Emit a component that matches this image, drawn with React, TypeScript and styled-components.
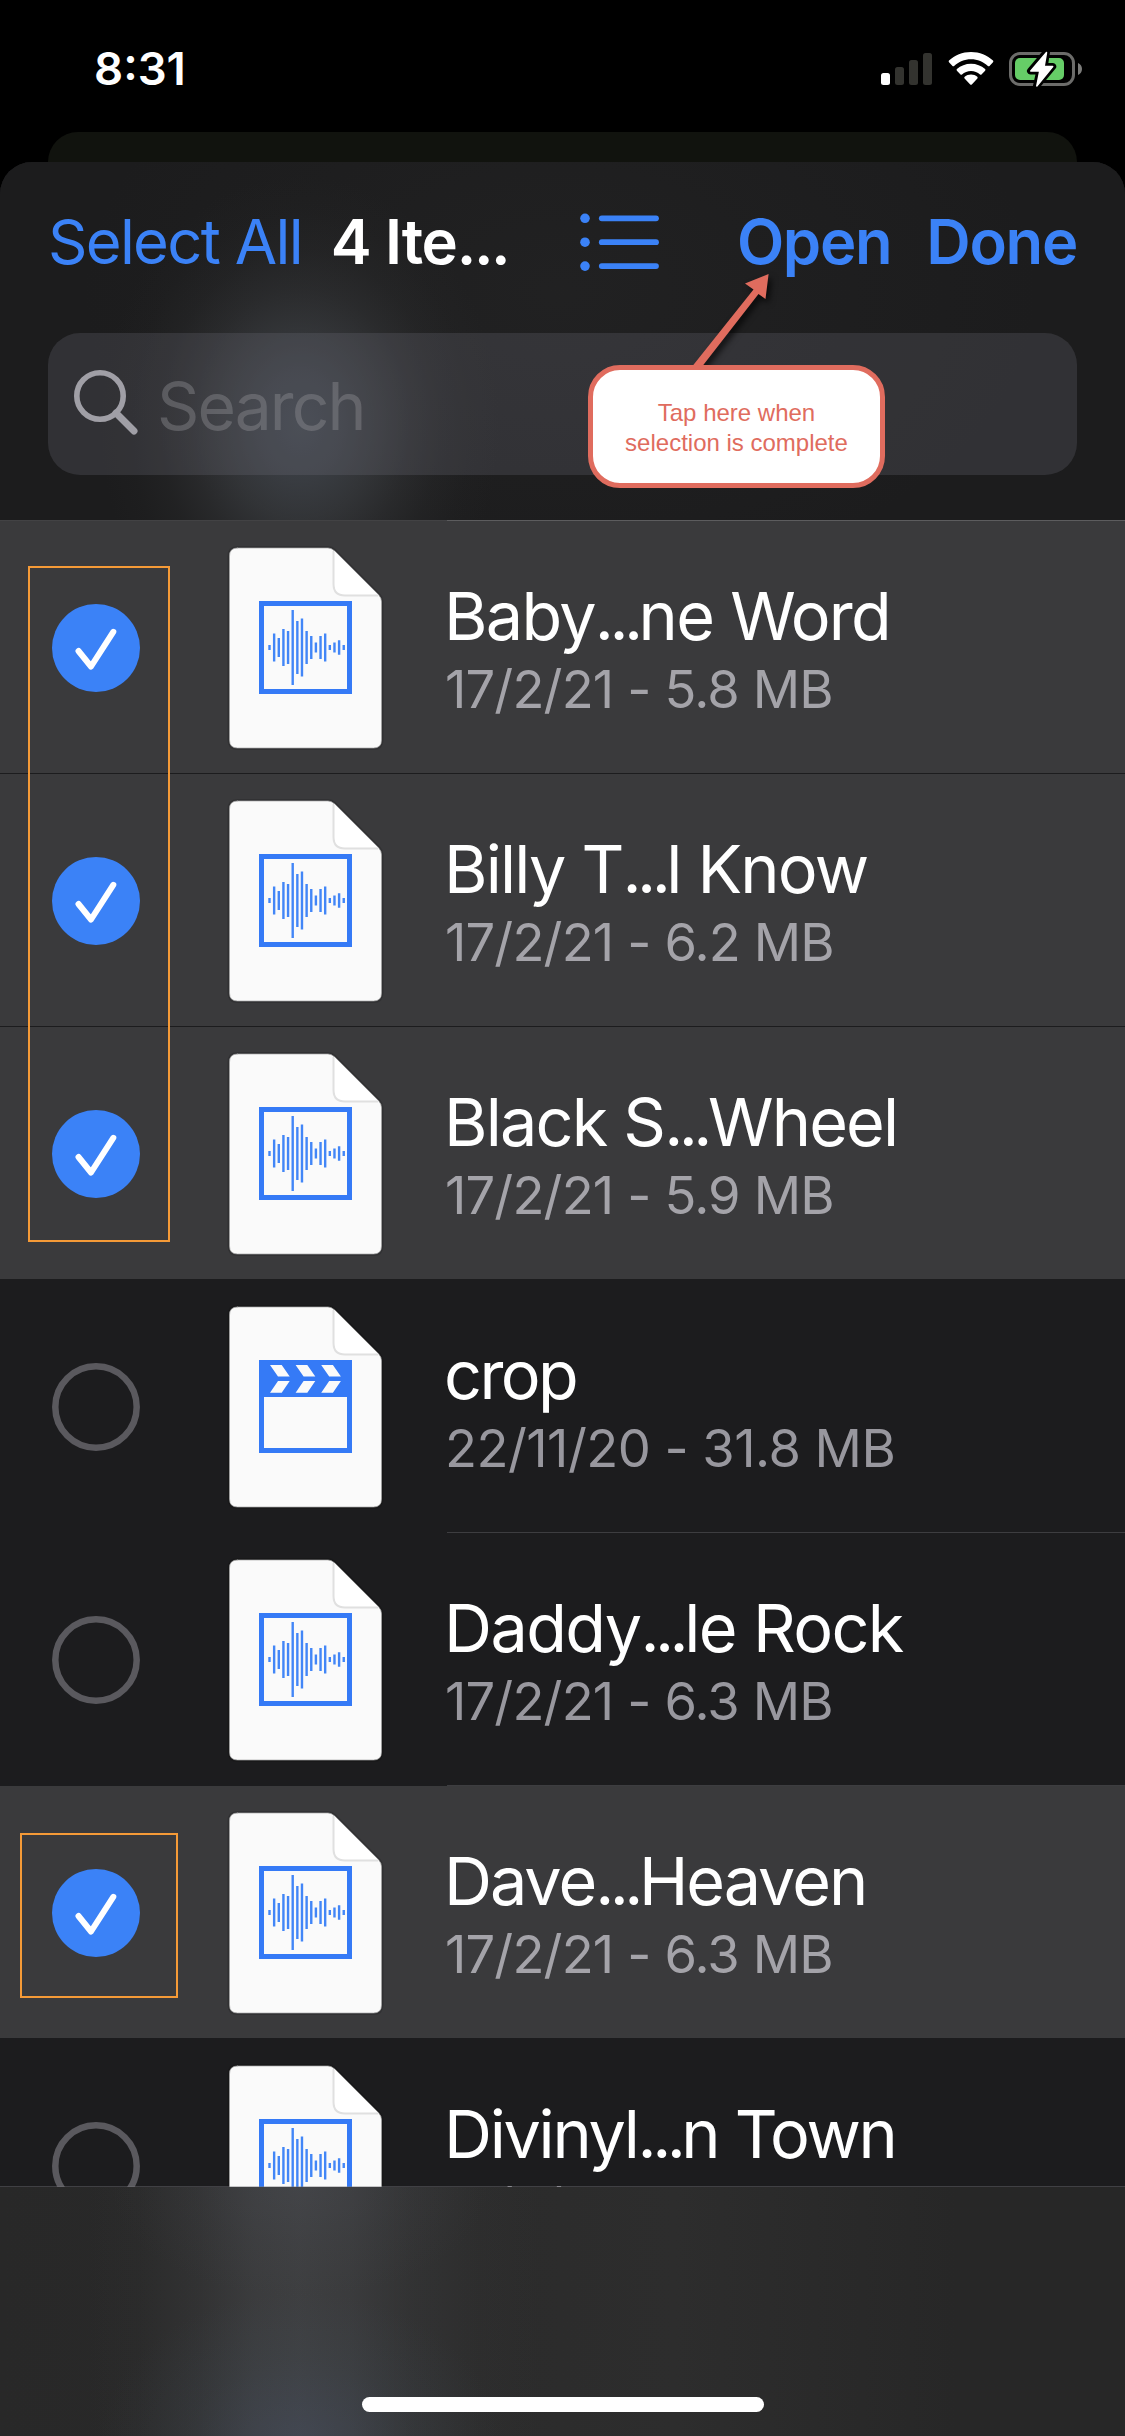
import React from "react";
import styled, { createGlobalStyle } from "styled-components";

const BLUE = "#3b82f7";
const DOC_BLUE = "#357af6";
const CORAL = "#e06c5e";
const ORANGE = "#f59a37";

const GlobalStyle = createGlobalStyle`
  *, *::before, *::after { box-sizing: border-box; }
  body { margin: 0; background: #000; }
`;

const Screen = styled.div`
  position: relative;
  width: 1125px;
  height: 2436px;
  overflow: hidden;
  display: flex;
  flex-direction: column;
  background: #000;
  color: #fff;
  font-family: Inter, "Liberation Sans", sans-serif;
`;

const StatusBar = styled.header`
  height: 132px;
  flex: none;
  display: flex;
  align-items: flex-start;
  justify-content: space-between;
  padding: 39px 42px 0 94px;
`;

const Clock = styled.time`
  font-size: 45.5px;
  line-height: 60px;
  font-weight: 600;
  letter-spacing: 0;
`;

const StatusIcons = styled.div`
  display: flex;
  align-items: flex-start;
  gap: 15px;
  padding-top: 10px;

  svg { display: block; }
`;

const BackSheet = styled.div`
  height: 60px;
  flex: none;
  margin: 0 48px -30px;
  border-radius: 30px 30px 0 0;
  background: #11130e;
`;

const Sheet = styled.main`
  position: relative;
  flex: 1;
  min-height: 0;
  display: flex;
  flex-direction: column;
  border-radius: 32px 32px 0 0;
  overflow: hidden;
  background: #1c1c1e;
`;

const SheetHeader = styled.div`
  height: 358px;
  flex: none;
  padding: 0 48px;
  background:
    radial-gradient(
      ellipse 200px 250px at 300px 263px,
      rgba(64, 69, 76, 0.95),
      rgba(63, 67, 73, 0.82) 22%,
      rgba(62, 65, 69, 0.64) 38%,
      rgba(60, 62, 65, 0.38) 55%,
      rgba(58, 60, 62, 0.18) 70%,
      rgba(56, 58, 60, 0.06) 85%,
      rgba(56, 58, 60, 0)
    ),
    radial-gradient(ellipse 480px 300px at 560px 130px, rgba(60, 60, 60, 0.16), rgba(60, 60, 60, 0)),
    #1c1c1d;
`;

const Toolbar = styled.nav`
  height: 160px;
  display: flex;
  align-items: center;
  font-size: 61.5px;
  line-height: 80px;
  white-space: nowrap;
`;

const TextButton = styled.button<{ $strong?: boolean; $gap?: number; $tracking: number }>`
  border: 0;
  padding: 0;
  margin: 0 0 0 ${(p) => p.$gap ?? 0}px;
  background: none;
  font: inherit;
  color: ${BLUE};
  font-weight: ${(p) => (p.$strong ? 600 : 400)};
  letter-spacing: ${(p) => p.$tracking}px;
`;

const SheetTitle = styled.h1`
  margin: 0 0 0 29px;
  width: 214px;
  font-size: inherit;
  font-weight: 600;
  letter-spacing: -1.2px;
`;

const ListIcon = styled.svg`
  display: block;
  flex: none;
  margin-left: 35px;
`;

const ToolbarActions = styled.div`
  margin-left: auto;
  display: flex;
`;

const SearchField = styled.label`
  height: 142px;
  margin-top: 11px;
  display: flex;
  align-items: center;
  padding: 0 26px;
  border-radius: 32px;
  background: rgba(118, 118, 128, 0.24);

  svg { display: block; flex: none; margin-top: -4px; }
`;

const Placeholder = styled.span`
  margin: 3px 0 0 17px;
  font-size: 66px;
  line-height: 84px;
  letter-spacing: -1.9px;
  color: rgba(142, 142, 147, 0.42);
`;

const FileList = styled.ul`
  height: 1667px;
  flex: none;
  margin: 0;
  padding: 0;
  list-style: none;
  overflow: hidden;
`;

const Row = styled.li<{ $selected: boolean; $edge: string }>`
  height: 253px;
  display: flex;
  background: ${(p) => (p.$selected ? "#3a3a3c" : "#1c1c1e")};
  border-top: 1px solid ${(p) => p.$edge};
`;

const CheckCell = styled.div`
  width: 225px;
  padding: 83px 0 0 52px;

  svg { display: block; }
`;

const DocCell = styled.div`
  width: 222px;
  padding-top: 22px;

  svg { display: block; }
`;

const FileText = styled.div<{ $line: string }>`
  flex: 1;
  margin-top: -1px;
  padding-top: 55px;
  border-top: 1px solid ${(p) => p.$line};
  white-space: nowrap;
`;

const FileName = styled.div<{ $tracking: number }>`
  height: 80px;
  font-size: 66.5px;
  line-height: 80px;
  letter-spacing: ${(p) => p.$tracking}px;
  text-indent: -3px;
`;

const Dots = styled.span<{ $tight: number }>`
  letter-spacing: ${(p) => p.$tight}px;
`;

const FileMeta = styled.div<{ $selected: boolean; $tracking: number }>`
  height: 66px;
  font-size: 52.5px;
  line-height: 66px;
  letter-spacing: ${(p) => p.$tracking}px;
  text-indent: -2px;
  color: ${(p) => (p.$selected ? "#a4a3a9" : "#98979e")};
`;

const BottomBar = styled.footer`
  position: relative;
  flex: 1;
  margin-top: -1px;
  display: flex;
  justify-content: center;
  align-items: flex-end;
  padding-bottom: 24px;
  border-top: 1px solid rgba(120, 120, 125, 0.4);
  background:
    radial-gradient(ellipse 190px 110px at 300px 0, rgba(84, 86, 94, 0.24), rgba(84, 86, 94, 0.08) 55%, rgba(84, 86, 94, 0)),
    radial-gradient(ellipse 200px 150px at 300px 255px, rgba(78, 92, 122, 0.3), rgba(72, 88, 104, 0.12) 55%, rgba(72, 88, 104, 0)),
    linear-gradient(
      90deg,
      rgba(62, 63, 65, 0) 90px,
      rgba(62, 63, 65, 0.1) 140px,
      rgba(62, 63, 65, 0.42) 200px,
      rgba(62, 63, 65, 0.85) 255px,
      rgba(62, 63, 65, 0.98) 300px,
      rgba(62, 63, 65, 0.82) 350px,
      rgba(62, 63, 65, 0.4) 410px,
      rgba(62, 63, 65, 0.1) 480px,
      rgba(62, 63, 65, 0) 540px
    ),
    linear-gradient(90deg, #282828, #2a2a2a 30%, #2d2d2d 60%, #272727 85%);
  background-clip: padding-box;
`;

const HomeIndicator = styled.div`
  width: 402px;
  height: 15px;
  border-radius: 8px;
  background: #fff;
`;

const Callout = styled.div`
  position: absolute;
  left: 588px;
  top: 365px;
  width: 297px;
  height: 123px;
  display: flex;
  align-items: center;
  justify-content: center;
  padding-top: 3px;
  border: 5px solid ${CORAL};
  border-radius: 32px;
  background: #fff;
  color: ${CORAL};
  font-family: "Liberation Sans", Arial, sans-serif;
  font-size: 24px;
  line-height: 30px;
  text-align: center;
`;

const Arrow = styled.svg`
  position: absolute;
  left: 680px;
  top: 264px;
  filter: drop-shadow(3px 4px 3px rgba(0, 0, 0, 0.7));
`;

const Highlight = styled.div<{ $x: number; $y: number; $w: number; $h: number }>`
  position: absolute;
  left: ${(p) => p.$x}px;
  top: ${(p) => p.$y}px;
  width: ${(p) => p.$w}px;
  height: ${(p) => p.$h}px;
  border: 2px solid ${ORANGE};
`;

const SignalIcon = () => (
  <svg width="52" height="38" viewBox="0 0 52 38">
    <rect x="0" y="24" width="9" height="12" rx="2.5" fill="#fff" />
    <rect x="14" y="18" width="9" height="18" rx="2.5" fill="#33332f" />
    <rect x="28" y="11" width="9" height="25" rx="2.5" fill="#33332f" />
    <rect x="42" y="4" width="9" height="32" rx="2.5" fill="#33332f" />
  </svg>
);

const WifiIcon = () => (
  <svg width="46" height="38" viewBox="0 0 46 38" fill="#fff">
    <path d="M23 3C31.6 3 39.3 6.2 45 11.6c.5.5.5 1.100 0 1.600l-3.500 3.700c-.5.5-1.100.5-1.600 0C35.400 12.700 29.500 10.200 23 10.200S10.600 12.700 6.100 16.900c-.5.5-1.100.5-1.600 0L1 13.200c-.5-.5-.5-1.100 0-1.600C6.700 6.200 14.400 3 23 3z" />
    <path d="M23 14.700c5.400 0 10.300 2 14.100 5.400.5.5.5 1.100 0 1.600l-3.600 3.700c-.5.5-1 .5-1.500 0-2.400-2.100-5.500-3.400-9-3.400s-6.600 1.300-9 3.400c-.5.5-1 .5-1.500 0l-3.600-3.700c-.5-.5-.5-1.100 0-1.600 3.800-3.400 8.700-5.400 14.100-5.400z" />
    <path d="M23 25.600c2.400 0 4.600.8 6.300 2.200.5.5.5 1.100.1 1.600l-5.600 6c-.5.5-1.100.5-1.600 0l-5.600-6c-.5-.5-.4-1.100.1-1.600 1.700-1.400 3.900-2.200 6.300-2.200z" />
  </svg>
);

const BatteryIcon = () => (
  <svg width="74" height="38" viewBox="0 0 74 38">
    <rect x="1.500" y="4.500" width="63" height="31" rx="9.500" fill="none" stroke="#6c6c6a" strokeWidth="3" />
    <path d="M69 14c2.400 1 4 3.300 4 6s-1.600 5-4 6z" fill="#7c7c7a" />
    <rect x="6" y="9" width="49" height="22" rx="5" fill="#66cd67" />
    <path d="M37.500 3 21.500 22h9.300l-3.300 15L43.700 17.500h-8.400z" fill="#fff" stroke="#000" strokeWidth="7" strokeLinejoin="round" />
    <path d="M37.500 3.500 21.800 22h9l-3 15L43.700 17.500h-8.600z" fill="#fff" stroke="#fff" strokeWidth="1.500" strokeLinejoin="round" />
  </svg>
);

const CheckMark = ({ on }: { on: boolean }) => (
  <svg width="88" height="88" viewBox="0 0 88 88" fill="none">
    {on ? (
      <>
        <circle cx="44" cy="44" r="44" fill={BLUE} />
        <path d="M26.500 47 39 62.500 61.300 27.800" stroke="#fff" strokeWidth="6" strokeLinecap="round" strokeLinejoin="round" />
      </>
    ) : (
      <circle cx="44" cy="44" r="40.700" stroke="#5a595e" strokeWidth="6.500" />
    )}
  </svg>
);

const WAVE = [5, 28, 19, 37, 33, 75, 53, 58, 33, 23, 10, 23, 28, 5, 10, 14.5, 5];

const Chevron = ({ x }: { x: number }) => (
  <path
    d={`M${x} 5h11.700l8 11.600h-11.700zM${x + 8} 21h11.700l-8 11.800H${x}z`}
    fill="#fafafa"
  />
);

type Kind = "audio" | "video";

const PAGE =
  "M12 5H103q3.500 0 6 2.500L154 52.500q2.500 2.500 2.500 6V197q0 8-8 8H12.500q-8 0-8-8V13q0-8 8-8z";

const DocIcon = ({ kind }: { kind: Kind }) => (
  <svg width="162" height="212" viewBox="0 0 162 212">
    <path d={PAGE} fill="none" stroke="#000" strokeOpacity="0.14" strokeWidth="4" />
    <path d={PAGE} fill="#fafafa" stroke="#a8a8a8" strokeWidth="0.700" />
    <path d="M109 7.500 154 52.500H120q-11 0-11-11z" fill="#fff" />
    <path d="M108.500 8V41q0 11.500 11.500 11.500H153" fill="none" stroke="#e0e0e0" strokeWidth="2" />
    <g transform="translate(34 58)">
      {kind === "audio" ? (
        <>
          <rect x="2.500" y="2.500" width="88" height="88" fill="none" stroke={DOC_BLUE} strokeWidth="5" />
          {WAVE.map((h, i) => (
            <rect key={i} x={9.3 + i * 4.64} y={46.5 - h / 2} width="2.400" height={h} fill="#4286f7" />
          ))}
        </>
      ) : (
        <>
          <path d="M0 0h93v93H0zM5 37v51h83V37z" fill={DOC_BLUE} fillRule="evenodd" />
          <Chevron x={11} />
          <Chevron x={36.6} />
          <Chevron x={62.2} />
        </>
      )}
    </g>
  </svg>
);

interface FileItem {
  head: string;
  tail?: string;
  meta: string;
  kind: Kind;
  selected: boolean;
  tracking: number;
  metaTracking?: number;
  edge: string;
  line: string;
}

const FILES: FileItem[] = [
  { head: "Baby", tail: "ne Word", meta: "17/2/21 - 5.8 MB", kind: "audio", selected: true, tracking: -1.7, edge: "#424244", line: "#5c5c5e" },
  { head: "Billy T", tail: "l Know", meta: "17/2/21 - 6.2 MB", kind: "audio", selected: true, tracking: -1.8, edge: "#1c1c1e", line: "#1c1c1e" },
  { head: "Black S", tail: "Wheel", meta: "17/2/21 - 5.9 MB", kind: "audio", selected: true, tracking: -1.8, edge: "#1c1c1e", line: "#1c1c1e" },
  { head: "crop", meta: "22/11/20 - 31.8 MB", kind: "video", selected: false, tracking: -2.6, metaTracking: -0.55, edge: "#1c1c1e", line: "#1c1c1e" },
  { head: "Daddy", tail: "le Rock", meta: "17/2/21 - 6.3 MB", kind: "audio", selected: false, tracking: -1.6, edge: "#1c1c1e", line: "#3d3d40" },
  { head: "Dave", tail: "Heaven", meta: "17/2/21 - 6.3 MB", kind: "audio", selected: true, tracking: -2, edge: "#1c1c1e", line: "#3d3d40" },
  { head: "Divinyl", tail: "n Town", meta: "17/2/21 - 5.5 MB", kind: "audio", selected: false, tracking: -2.3, edge: "#1c1c1e", line: "#1c1c1e" },
];

export default function App() {
  return (
    <>
      <GlobalStyle />
      <Screen>
        <StatusBar>
          <Clock>8:31</Clock>
          <StatusIcons>
            <SignalIcon />
            <WifiIcon />
            <BatteryIcon />
          </StatusIcons>
        </StatusBar>
        <BackSheet />
        <Sheet>
          <SheetHeader>
            <Toolbar>
              <TextButton $tracking={-1.7}>Select All</TextButton>
              <SheetTitle>
                4 Ite<Dots $tight={-2.4}>...</Dots>
              </SheetTitle>
              <ListIcon width="80" height="60" viewBox="0 0 80 60" stroke={BLUE} strokeWidth="5.800" strokeLinecap="round">
                {[6.3, 30.2, 54.1].map((y) => (
                  <g key={y}>
                    <circle cx="5" cy={y} r="4.800" fill={BLUE} stroke="none" />
                    <path d={`M21.800 ${y}H76`} />
                  </g>
                ))}
              </ListIcon>
              <ToolbarActions>
                <TextButton $strong $tracking={-1.3}>Open</TextButton>
                <TextButton $strong $gap={35} $tracking={-1.3}>Done</TextButton>
              </ToolbarActions>
            </Toolbar>
            <SearchField>
              <svg width="66" height="70" viewBox="0 0 66 70" fill="none" stroke="#a09fa6">
                <circle cx="26" cy="29" r="23.200" strokeWidth="5.600" />
                <path d="M42 46 60 64" strokeWidth="7" strokeLinecap="round" />
              </svg>
              <Placeholder>Search</Placeholder>
            </SearchField>
          </SheetHeader>
          <FileList>
            {FILES.map((f) => (
              <Row key={f.head} $selected={f.selected} $edge={f.edge}>
                <CheckCell>
                  <CheckMark on={f.selected} />
                </CheckCell>
                <DocCell>
                  <DocIcon kind={f.kind} />
                </DocCell>
                <FileText $line={f.line}>
                  <FileName $tracking={f.tracking}>
                    {f.head}
                    {f.tail && <Dots $tight={-4.6}>...</Dots>}
                    {f.tail}
                  </FileName>
                  <FileMeta $selected={f.selected} $tracking={f.metaTracking ?? -0.85}>
                    {f.meta}
                  </FileMeta>
                </FileText>
              </Row>
            ))}
          </FileList>
          <BottomBar>
            <HomeIndicator />
          </BottomBar>
        </Sheet>
        <Arrow width="110" height="104" viewBox="0 0 110 104">
          <path d="M88.600 10 85.500 35 78.500 30 22.500 102 12.500 102 73.500 25.500 65 19.500z" fill={CORAL} />
        </Arrow>
        <Callout>
          Tap here when
          <br />
          selection is complete
        </Callout>
        <Highlight $x={28} $y={566} $w={142} $h={676} />
        <Highlight $x={20} $y={1833} $w={158} $h={165} />
      </Screen>
    </>
  );
}
